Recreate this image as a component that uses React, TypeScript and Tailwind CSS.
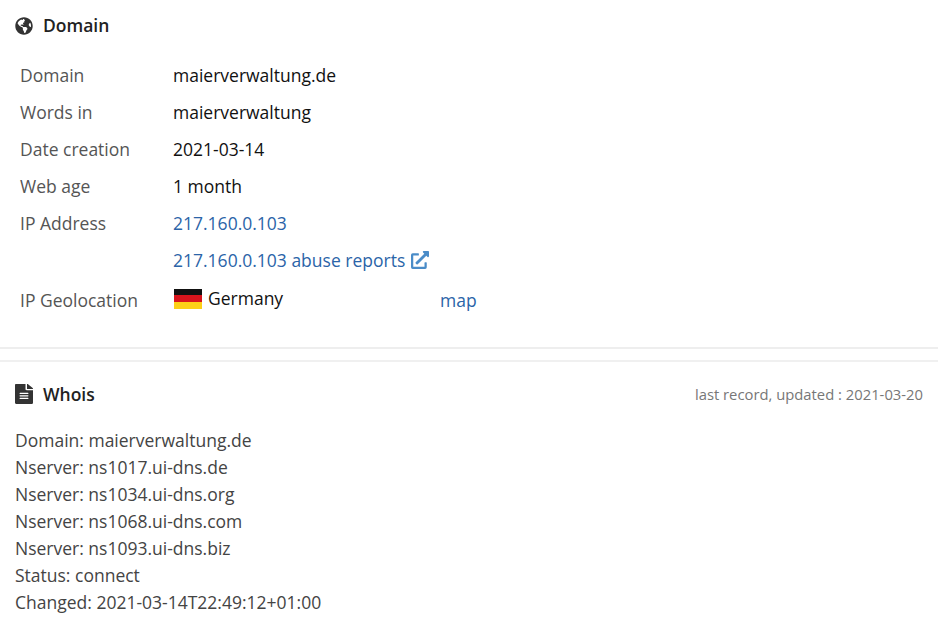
import type { ReactNode } from "react";
import { FaGlobeAmericas, FaFileAlt, FaExternalLinkAlt } from "react-icons/fa";

const rows: [string, string][] = [
  ["Domain", "maierverwaltung.de"],
  ["Words in", "maierverwaltung"],
  ["Date creation", "2021-03-14"],
  ["Web age", "1 month"],
];

const whois = [
  "Domain: maierverwaltung.de",
  "Nserver: ns1017.ui-dns.de",
  "Nserver: ns1034.ui-dns.org",
  "Nserver: ns1068.ui-dns.com",
  "Nserver: ns1093.ui-dns.biz",
  "Status: connect",
  "Changed: 2021-03-14T22:49:12+01:00",
];

function Row({ label, children }: { label: string; children: ReactNode }) {
  return (
    <div className="flex h-[37px] items-center">
      <div className="w-[153px] text-[#555]">{label}</div>
      <div className="text-[#111]">{children}</div>
    </div>
  );
}

export default function App() {
  return (
    <div className="h-[627px] w-[938px] overflow-hidden bg-white font-['Open_Sans',sans-serif] text-[17.5px] leading-[27px]">
      <div className="flex h-[51px] items-center gap-[10px] pl-[15px]">
        <FaGlobeAmericas className="h-[18px] w-[18px] text-[#333]" />
        <span className="text-[17.5px] font-semibold text-[#222]">Domain</span>
      </div>
      <div className="pl-5 pt-[6px]">
        {rows.map(([l, v]) => (
          <Row key={l} label={l}>{v}</Row>
        ))}
        <Row label="IP Address"><span className="text-[#2b64a8]">217.160.0.103</span></Row>
        <Row label="">
          <span className="flex items-center gap-[6px] text-[#2b64a8]">
            217.160.0.103 abuse reports
            <FaExternalLinkAlt className="mb-[2px] h-[18px] w-[18px] text-[#4a8cc8]" />
          </span>
        </Row>
        <div className="flex h-[41px] items-center pt-[2px]">
          <div className="w-[153px] text-[#555]">IP Geolocation</div>
          <div className="flex w-[267px] items-center gap-[6px] pb-[4px] text-[#111]">
            <span className="ml-px flex h-[20px] w-[28px] flex-col">
              <span className="flex-1 bg-[#111]" />
              <span className="flex-1 bg-[#d8141c]" />
              <span className="flex-1 bg-[#fdd017]" />
            </span>
            <span>Germany</span>
          </div>
          <div className="text-[#2b64a8]">map</div>
        </div>
      </div>
      <div className="mt-[27px] h-[15px] border-y-2 border-y-[#eee] border-b-[#f0f0f0]" />
      <div className="flex h-[64px] items-center justify-between px-[15px]">
        <div className="flex items-center gap-[10px]">
          <FaFileAlt preserveAspectRatio="none" className="h-[20px] w-[18px] text-[#333]" />
          <span className="font-semibold text-[#222]">Whois</span>
        </div>
        <span className="text-[14.8px] text-[#777]">last record, updated : 2021-03-20</span>
      </div>
      <div className="pl-[15px] pt-[1px] text-[#444]">
        {whois.map((w) => (
          <div key={w}>{w}</div>
        ))}
      </div>
    </div>
  );
}
